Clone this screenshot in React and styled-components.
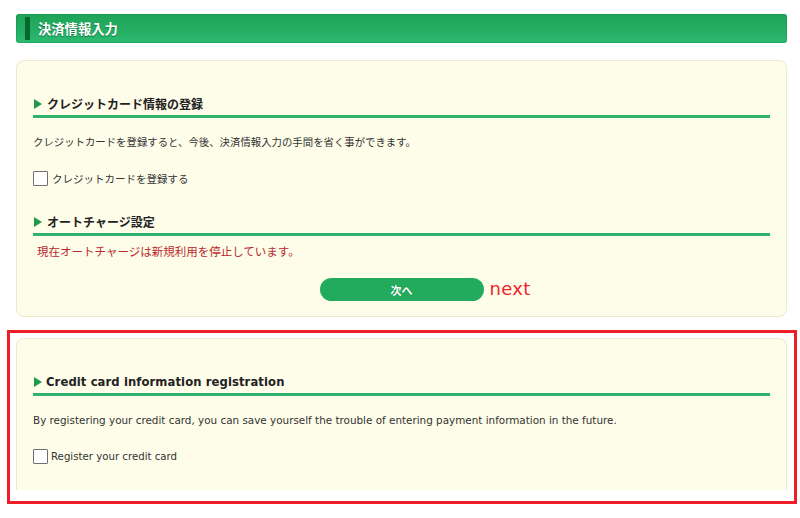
import React from "react";
import styled, { createGlobalStyle } from "styled-components";

const Global = createGlobalStyle`
  html, body { margin: 0; padding: 0; background: #ffffff; }
  body { font-family: "Noto Sans CJK JP", "DejaVu Sans", sans-serif; color: #333; }
`;

const Page = styled.div`
  width: 800px;
  padding-top: 14px;
  display: flex;
  flex-direction: column;
`;

const Header = styled.div`
  margin: 0 13px 0 16px;
  height: 29px;
  border-radius: 3px;
  background: linear-gradient(to bottom, #1fa458 0%, #24ad62 50%, #2cbb72 100%);
  box-shadow: inset 0 0 0 1px rgba(0, 120, 60, 0.25);
  display: flex;
  align-items: center;
  padding-left: 9px;
  gap: 8px;
`;

const Stripe = styled.span`
  width: 5px;
  height: 23px;
  background: #05692f;
`;

const HeaderTitle = styled.h1`
  margin: 0;
  font-size: 13.3px;
  font-weight: 700;
  color: #fff;
  letter-spacing: 0;
  line-height: 1;
  text-shadow: 0 1px 1px rgba(0, 70, 30, 0.6);
`;

const Panel = styled.div`
  margin: ${(p) => p.$margin || "0"};
  background: #fefde9;
  border: 1px solid #ece9cc;
  border-radius: 8px;
  padding: 33px 16px ${(p) => (p.$cut ? "0" : "15px")} 16px;
  ${(p) =>
    p.$cut &&
    `
    height: 152px;
    box-sizing: border-box;
    border-bottom: none;
    border-bottom-left-radius: 0;
    border-bottom-right-radius: 0;
    overflow: hidden;
  `}
  display: flex;
  flex-direction: column;
`;

const Heading = styled.h2`
  margin: ${(p) => p.$mt || "0"} 0 0 0;
  height: 20px;
  line-height: 20px;
  padding-bottom: 1px;
  border-bottom: 3px solid #2db36c;
  display: flex;
  align-items: center;
  gap: ${(p) => (p.$en ? "4px" : "5px")};
  font-size: ${(p) => (p.$en ? "11.6px" : "12px")};
  font-weight: 700;
  color: #222;
  font-family: ${(p) =>
    p.$en ? `"DejaVu Sans", sans-serif` : `"Noto Sans CJK JP", sans-serif`};
  letter-spacing: ${(p) => (p.$en ? "0.1px" : "0")};
`;

const Tri = styled.span`
  width: 0;
  height: 0;
  margin-left: 1px;
  border-top: 5px solid transparent;
  border-bottom: 5px solid transparent;
  border-left: 8px solid #1e9a4c;
`;

const Text = styled.p`
  margin: ${(p) => p.$mt || "15px"} 0 0 ${(p) => p.$indent || "0"};
  line-height: 18px;
  height: 18px;
  white-space: nowrap;
  font-size: ${(p) => (p.$en ? "10.4px" : p.$size || "10.4px")};
  color: ${(p) => p.$color || "#333"};
  font-family: ${(p) =>
    p.$en ? `"DejaVu Sans", sans-serif` : `"Noto Sans CJK JP", sans-serif`};
`;

const CheckRow = styled.label`
  margin-top: 18px;
  height: 18px;
  display: flex;
  align-items: center;
  gap: ${(p) => (p.$en ? "3px" : "4px")};
  font-size: ${(p) => (p.$en ? "10.2px" : "10.5px")};
  color: #333;
  font-family: ${(p) =>
    p.$en ? `"DejaVu Sans", sans-serif` : `"Noto Sans CJK JP", sans-serif`};
  white-space: nowrap;
`;

const Box = styled.span`
  width: 13px;
  height: 13px;
  border: 1px solid #6f6f6f;
  border-radius: 1px;
  background: #fff;
  flex: none;
`;

const ButtonRow = styled.div`
  margin-top: 18px;
  display: flex;
  justify-content: center;
`;

const ButtonWrap = styled.div`
  position: relative;
`;

const NextButton = styled.button`
  width: 164px;
  height: 23px;
  border: none;
  border-radius: 12px;
  background: #22ab5d;
  color: #fff;
  font-family: "Noto Sans CJK JP", sans-serif;
  font-weight: 700;
  font-size: 11px;
  padding: 0;
  display: flex;
  align-items: center;
  justify-content: center;
  text-shadow: 0 0 1px rgba(0, 60, 20, 0.4);
`;

const Note = styled.span`
  position: absolute;
  left: 170px;
  top: -2px;
  color: #f2232b;
  font-family: "Comic Sans MS", "DejaVu Sans", cursive;
  font-size: 18px;
  line-height: 26px;
  letter-spacing: 0.3px;
`;

const RedFrame = styled.div`
  margin: 13px 3px 0 7px;
  border: 3px solid #ee1d27;
  padding: 5px 7px 11px 6px;
`;

export default function App() {
  return (
    <>
      <Global />
      <Page>
        <Header>
          <Stripe />
          <HeaderTitle>決済情報入力</HeaderTitle>
        </Header>

        <Panel $margin="17px 13px 0 16px">
          <Heading>
            <Tri />
            クレジットカード情報の登録
          </Heading>
          <Text>クレジットカードを登録すると、今後、決済情報入力の手間を省く事ができます。</Text>
          <CheckRow>
            <Box />
            クレジットカードを登録する
          </CheckRow>
          <Heading $mt="25px">
            <Tri />
            オートチャージ設定
          </Heading>
          <Text $mt="6px" $indent="4px" $size="11.5px" $color="#b8282c">
            現在オートチャージは新規利用を停止しています。
          </Text>
          <ButtonRow>
            <ButtonWrap>
              <NextButton>次へ</NextButton>
              <Note>next</Note>
            </ButtonWrap>
          </ButtonRow>
        </Panel>

        <RedFrame>
          <Panel $cut>
            <Heading $en>
              <Tri />
              Credit card information registration
            </Heading>
            <Text $en>
              By registering your credit card, you can save yourself the trouble of entering payment information in the future.
            </Text>
            <CheckRow $en>
              <Box />
              Register your credit card
            </CheckRow>
          </Panel>
        </RedFrame>
      </Page>
    </>
  );
}
